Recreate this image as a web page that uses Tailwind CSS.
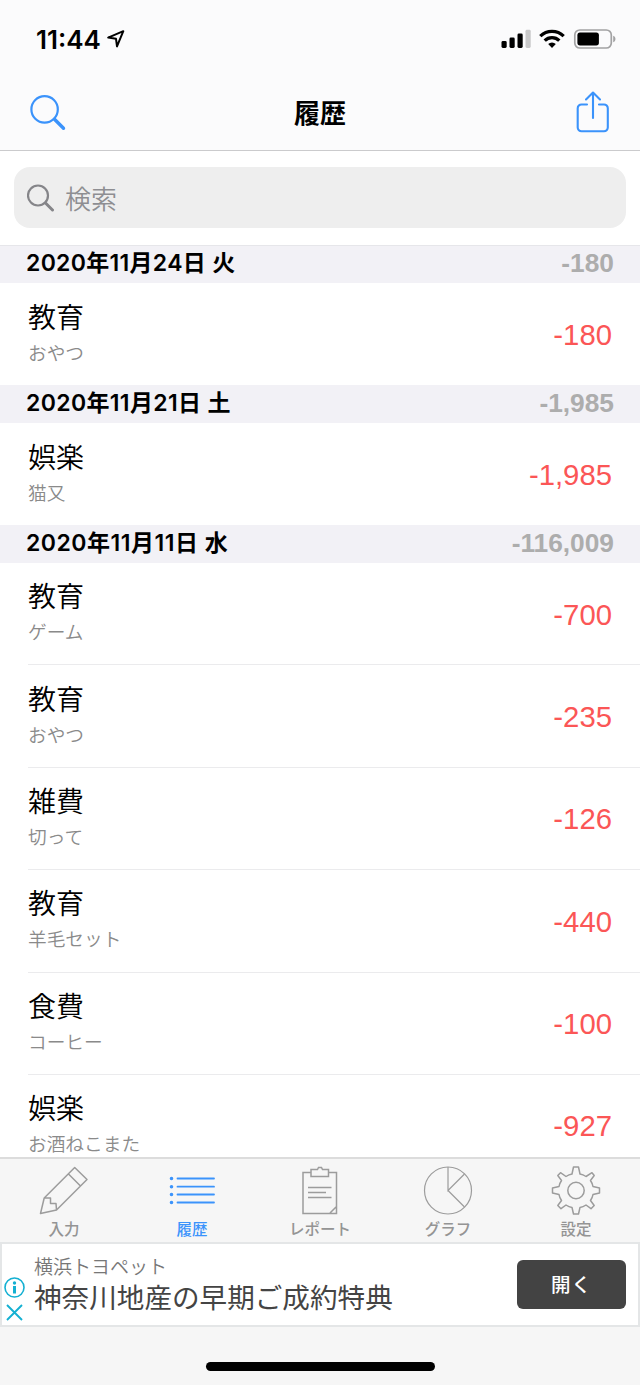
<!DOCTYPE html>
<html lang="ja">
<head>
    <meta charset="UTF-8">
    <meta name="viewport" content="width=device-width, initial-scale=1.0">
    <title>履歴</title>
    <script src="https://cdn.jsdelivr.net/npm/@tailwindcss/browser@4"></script>
</head>
<body class="bg-white font-[Inter,'Noto_Sans_CJK_JP',sans-serif] text-black">
    <div class="w-[640px] h-[1385px] flex flex-col overflow-hidden">

        <!-- Status bar + navigation -->
        <header class="h-[151px] shrink-0 bg-[#fbfbfc] border-b border-[#cbcbcd]">
            <div class="h-[76px] flex items-center justify-between pl-[36px] pr-[24px] pt-[2px]">
                <div class="flex items-center gap-[6px]">
                    <span class="text-[26px] leading-none font-semibold pt-px">11:44</span>
                    <svg class="w-[18px] h-[18px]" viewBox="0 0 18 18" fill="none" stroke="#000" stroke-width="2" stroke-linejoin="round"><path d="M1.200 7.600 16.300 1.200 10 16.400 9 8.800Z"/></svg>
                </div>
                <div class="flex items-center">
                    <svg class="w-[30px] h-[20px]" viewBox="0 0 30 20">
                        <rect x="0.500" y="12" width="5.200" height="7" rx="1.400"/>
                        <rect x="8.500" y="8.500" width="5.200" height="10.500" rx="1.400"/>
                        <rect x="16.500" y="4.500" width="5.200" height="14.500" rx="1.400"/>
                        <rect x="24.500" y="0.800" width="5.200" height="18.200" rx="1.400" fill="#c8c8c9"/>
                    </svg>
                    <svg class="w-[26px] h-[20px] ml-[8px]" viewBox="0 0 26 20" fill="none" stroke="#000" stroke-width="3.300">
                        <path d="M1.300 7.100a16.700 16.700 0 0 1 23.400 0"/>
                        <path d="M5.700 11.600a10.400 10.400 0 0 1 14.600 0"/>
                        <path d="M13 19 9.200 15.100a5.400 5.400 0 0 1 7.600 0Z" fill="#000" stroke="none"/>
                    </svg>
                    <svg class="w-[43px] h-[20px] ml-[8px]" viewBox="0 0 43 20">
                        <rect x="1.800" y="1" width="36.500" height="18" rx="5" fill="none" stroke="#a2a2a3" stroke-width="1.700"/>
                        <rect x="4.400" y="3.600" width="21.500" height="12.800" rx="2.600"/>
                        <path d="M40.200 6.800c3 1 3 5.400 0 6.400Z" fill="#a2a2a3"/>
                    </svg>
                </div>
            </div>
            <div class="h-[74px] grid grid-cols-3 items-center pl-[30px] pr-[30px]">
                <svg class="w-[36px] h-[36px]" viewBox="0 0 36 36" fill="none" stroke="#3b93fb" stroke-linecap="round"><circle cx="14.600" cy="14.400" r="13.200" stroke-width="2.200"/><path d="M24.500 24.200 33.500 33.200" stroke-width="3.400"/></svg>
                <h1 class="text-center text-[26px] leading-none font-bold pt-[2px]">履歴</h1>
                <svg class="w-[34px] h-[42px] justify-self-end mb-[2px]" viewBox="0 0 34 42" fill="none" stroke="#3b93fb" stroke-width="2.100" stroke-linecap="round" stroke-linejoin="round"><path d="M11 13.500H5.500a3.800 3.800 0 0 0-3.800 3.800V36.500a3.800 3.800 0 0 0 3.800 3.800H28a3.800 3.800 0 0 0 3.800-3.800V17.300A3.800 3.800 0 0 0 28 13.500H23M17 27V1.500M10 8.500l7-7 7 7"/></svg>
            </div>
        </header>

        <!-- Search field -->
        <div class="h-[94px] shrink-0 px-[14px] pt-[16px]">
            <div class="h-[61px] rounded-[16px] bg-[#eeeeee] flex items-center pl-[13px] gap-[10px] text-[#8e8e92]">
                <svg class="w-[28px] h-[28px]" viewBox="0 0 28 28" fill="none" stroke="#858589" stroke-linecap="round"><circle cx="11" cy="11.500" r="10" stroke-width="2.200"/><path d="M18.500 19 25.500 26" stroke-width="3"/></svg>
                <span class="text-[26px] leading-none font-[350] pt-[4px]">検索</span>
            </div>
        </div>

        <!-- History list -->
        <main class="flex-1 min-h-0 overflow-hidden">
            <section>
                <div class="h-[38px] bg-[#f2f1f6] border-t border-[#e6e6ea] flex items-center justify-between pl-[26px] pr-[26px] pb-[2px]">
                    <h2 class="text-[23px] leading-none tracking-[0.3px] font-semibold">2020年11月24日 火</h2>
                    <span class="font-['Liberation_Sans',sans-serif] text-[26.300px] leading-none font-bold text-[#adadad]">-180</span>
                </div>
                <div class="h-[102px] pl-[28px] pr-[28px] flex items-center justify-between">
                    <div class="flex flex-col gap-[10px] pb-[3px]">
                        <span class="text-[28px] leading-[32px] font-[350]">教育</span>
                        <span class="text-[18.700px] leading-[20px] font-[350] text-[#8a8a8a]">おやつ</span>
                    </div>
                    <span class="font-['Liberation_Sans',sans-serif] text-[29.300px] leading-none text-[#fb5656] pt-px">-180</span>
                </div>
            </section>
            <section>
                <div class="h-[38px] bg-[#f2f1f6] flex items-center justify-between pl-[26px] pr-[26px] pb-px">
                    <h2 class="text-[23px] leading-none tracking-[0.350px] font-semibold">2020年11月21日 土</h2>
                    <span class="font-['Liberation_Sans',sans-serif] text-[26.300px] leading-none font-bold text-[#adadad]">-1,985</span>
                </div>
                <div class="h-[102px] pl-[28px] pr-[28px] flex items-center justify-between">
                    <div class="flex flex-col gap-[10px] pb-[3px]">
                        <span class="text-[28px] leading-[32px] font-[350]">娯楽</span>
                        <span class="text-[18.700px] leading-[20px] font-[350] text-[#8a8a8a]">猫又</span>
                    </div>
                    <span class="font-['Liberation_Sans',sans-serif] text-[29.300px] leading-none text-[#fb5656] pt-px">-1,985</span>
                </div>
            </section>
            <section>
                <div class="h-[38px] bg-[#f2f1f6] flex items-center justify-between pl-[26px] pr-[26px] pb-px">
                    <h2 class="text-[23px] leading-none tracking-[0.500px] font-semibold">2020年11月11日 水</h2>
                    <span class="font-['Liberation_Sans',sans-serif] text-[26.300px] leading-none font-bold text-[#adadad]">-116,009</span>
                </div>
                <div class="pl-[28px]">
                    <div class="h-[102.400px] pr-[28px] flex items-center justify-between border-b border-[#ebebed]">
                        <div class="flex flex-col gap-[10px] pb-[3px]">
                            <span class="text-[28px] leading-[32px] font-[350]">教育</span>
                            <span class="text-[18.700px] leading-[20px] font-[350] text-[#8a8a8a]">ゲーム</span>
                        </div>
                        <span class="font-['Liberation_Sans',sans-serif] text-[29.300px] leading-none text-[#fb5656] pt-px">-700</span>
                    </div>
                    <div class="h-[102.400px] pr-[28px] flex items-center justify-between border-b border-[#ebebed]">
                        <div class="flex flex-col gap-[10px] pb-[3px]">
                            <span class="text-[28px] leading-[32px] font-[350]">教育</span>
                            <span class="text-[18.700px] leading-[20px] font-[350] text-[#8a8a8a]">おやつ</span>
                        </div>
                        <span class="font-['Liberation_Sans',sans-serif] text-[29.300px] leading-none text-[#fb5656] pt-px">-235</span>
                    </div>
                    <div class="h-[102.400px] pr-[28px] flex items-center justify-between border-b border-[#ebebed]">
                        <div class="flex flex-col gap-[10px] pb-[3px]">
                            <span class="text-[28px] leading-[32px] font-[350]">雑費</span>
                            <span class="text-[18.700px] leading-[20px] font-[350] text-[#8a8a8a]">切って</span>
                        </div>
                        <span class="font-['Liberation_Sans',sans-serif] text-[29.300px] leading-none text-[#fb5656] pt-px">-126</span>
                    </div>
                    <div class="h-[102.400px] pr-[28px] flex items-center justify-between border-b border-[#ebebed]">
                        <div class="flex flex-col gap-[10px] pb-[3px]">
                            <span class="text-[28px] leading-[32px] font-[350]">教育</span>
                            <span class="text-[18.700px] leading-[20px] font-[350] text-[#8a8a8a]">羊毛セット</span>
                        </div>
                        <span class="font-['Liberation_Sans',sans-serif] text-[29.300px] leading-none text-[#fb5656] pt-px">-440</span>
                    </div>
                    <div class="h-[102.400px] pr-[28px] flex items-center justify-between border-b border-[#ebebed]">
                        <div class="flex flex-col gap-[10px] pb-[3px]">
                            <span class="text-[28px] leading-[32px] font-[350]">食費</span>
                            <span class="text-[18.700px] leading-[20px] font-[350] text-[#8a8a8a]">コーヒー</span>
                        </div>
                        <span class="font-['Liberation_Sans',sans-serif] text-[29.300px] leading-none text-[#fb5656]">-100</span>
                    </div>
                    <div class="h-[102.400px] pr-[28px] flex items-center justify-between">
                        <div class="flex flex-col gap-[10px] pb-[5px]">
                            <span class="text-[28px] leading-[32px] font-[350]">娯楽</span>
                            <span class="text-[18.700px] leading-[20px] font-[350] text-[#8a8a8a]">お酒ねこまた</span>
                        </div>
                        <span class="font-['Liberation_Sans',sans-serif] text-[29.300px] leading-none text-[#fb5656] pb-px">-927</span>
                    </div>
                </div>
            </section>
        </main>

        <!-- Tab bar -->
        <nav class="h-[85px] shrink-0 bg-[#f6f6f6] border-t-2 border-[#dcdcdc] grid grid-cols-5 text-[15.500px] leading-none font-medium text-[#949494]">
            <div class="flex flex-col items-center pt-[7px] gap-[6px]">
                <svg class="w-[50px] h-[50px]" viewBox="0 0 50 50" fill="none" stroke="#9c9c9c" stroke-width="1.500" stroke-linejoin="round"><path d="M35.700 1.500 48 13.500 17.500 44 1.500 47.500 5.200 32ZM29.500 8 41.500 20M5.200 32H11.500V37.500H17L17.500 44"/></svg>
                <span>入力</span>
            </div>
            <div class="flex flex-col items-center pt-[7px] gap-[6px] text-[#3b93fb]">
                <svg class="w-[50px] h-[50px]" viewBox="0 0 50 50" fill="none" stroke="currentColor" stroke-width="1.800" stroke-linecap="round"><path d="M10.500 12.500H47M10.500 20.700H47M10.500 28.500H47M10.500 36.500H47"/><path d="M4.500 12.500h.01M4.500 20.700h.01M4.500 28.500h.01M4.500 36.500h.01" stroke-width="3.600"/></svg>
                <span>履歴</span>
            </div>
            <div class="flex flex-col items-center pt-[7px] gap-[6px]">
                <svg class="w-[50px] h-[50px]" viewBox="0 0 50 50" fill="none" stroke="#9c9c9c" stroke-width="1.500"><path d="M15.500 6.500H8V47.500H41.500V6.500H33.500M16 3.500H22.500L23.500 1.500H26.500L27.500 3.500H33.500V10.500H16ZM13 21.500H36.500M13 26.500H31M13 31.500H36.500M35 47 41 41"/></svg>
                <span>レポート</span>
            </div>
            <div class="flex flex-col items-center pt-[7px] gap-[6px]">
                <svg class="w-[50px] h-[50px]" viewBox="0 0 50 50" fill="none" stroke="#9c9c9c" stroke-width="1.200"><circle cx="25" cy="24.500" r="23.500"/><path d="M25 1V24.500L41.500 8M25 24.500 41.500 41"/></svg>
                <span>グラフ</span>
            </div>
            <div class="flex flex-col items-center pt-[7px] gap-[6px]">
                <svg class="w-[50px] h-[50px]" viewBox="0 0 50 50" fill="none" stroke="#9c9c9c" stroke-width="1.500" stroke-linejoin="round"><path d="M22.500 1H27.500L29 8Q32 8.500 35 10.500L41 6.700 43.200 9.500 39.500 14.500Q41.500 17.500 42 20.500L48.500 22V27L42 28.500Q41.500 31.500 39.500 34.500L43.200 39.500 40 42.700 35 39Q32 41 29 41.500L27.500 48H22.500L21 41.500Q18 41 15 39L10 42.700 6.800 39.500 10.500 34.500Q8.500 31.500 8 28.500L1.500 27V22L8 20.500Q8.500 17.500 10.500 14.500L6.800 9.500 9.500 6.700 15 10.500Q18 8.500 21 8Z"/><circle cx="25" cy="24.500" r="8.200"/></svg>
                <span>設定</span>
            </div>
        </nav>

        <!-- Ad banner -->
        <aside class="h-[85px] shrink-0 bg-white border-2 border-[#e4e6e7] flex items-center pl-[2px] pr-[12px] font-['Noto_Sans_CJK_JP',sans-serif]">
            <div class="flex flex-col items-center gap-[6px] pt-[28px]">
                <svg class="w-[21px] h-[21px]" viewBox="0 0 21 21" fill="none" stroke="#14b0d2" stroke-width="1.600"><circle cx="10.500" cy="10.500" r="9.500"/><path d="M10.500 9V16.500" stroke-width="3"/><circle cx="10.500" cy="6" r="1.700" fill="#14b0d2" stroke="none"/></svg>
                <svg class="w-[17px] h-[17px]" viewBox="0 0 17 17" stroke="#14b0d2" stroke-width="1.900"><path d="M1 1 16 16M16 1 1 16"/></svg>
            </div>
            <div class="flex-1 pl-[9px] pb-[3px] flex flex-col gap-[2px] text-[#444444]">
                <span class="text-[19px] leading-[24px] font-[350] text-[#777777]">横浜トヨペット</span>
                <span class="text-[27.600px] leading-[32px]">神奈川地産の早期ご成約特典</span>
            </div>
            <div class="w-[109px] h-[49px] rounded-[6px] bg-[#434343] text-white text-[19.500px] leading-none tracking-[1px] font-medium flex items-center justify-center pb-[2px]">開く</div>
        </aside>

        <!-- Home indicator -->
        <footer class="h-[58px] shrink-0 bg-[#f6f6f6] flex justify-center pt-[35px]">
            <div class="w-[229px] h-[9px] rounded-full bg-black"></div>
        </footer>
    </div>
</body>
</html>
